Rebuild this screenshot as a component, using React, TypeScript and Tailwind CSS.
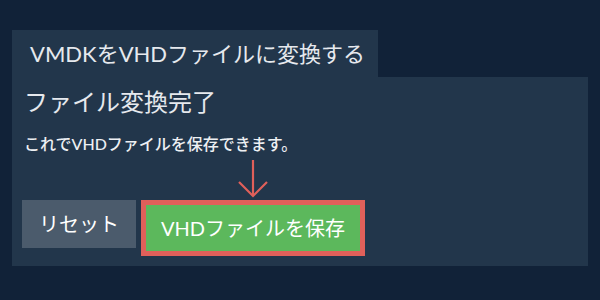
export default function App() {
  const font = { fontFamily: '"Lato", "Noto Sans CJK JP", sans-serif' };
  return (
    <div className="w-[600px] h-[300px] bg-[#112238] pt-[30px] px-[12px]" style={font}>
      <div className="w-[366px] h-[47px] bg-[#22364b] flex items-center pl-[18px] text-[22px] text-[#e6e9ee]">
        VMDKをVHDファイルに変換する
      </div>
      <div className="h-[189px] bg-[#22364b] px-[12px] pt-[9px]">
        <h2 className="text-[24px] leading-[32px] text-[#e6e9ee]">ファイル変換完了</h2>
        <p className="mt-[15px] text-[16px] leading-[22px] font-medium text-[#eef0f3]">
          これでVHDファイルを保存できます。
        </p>
        <div className="mt-[45px] flex items-start gap-[5px] ml-[-2px]">
          <button className="w-[114px] h-[48px] bg-[#4b5b6c] text-white text-[20px] flex items-center justify-center">
            リセット
          </button>
          <div className="relative">
            <svg
              className="absolute left-1/2 -translate-x-1/2 bottom-full mb-[2px]"
              width="30"
              height="38"
              viewBox="0 0 30 38"
              fill="none"
              stroke="#e0605a"
              strokeWidth="2.2"
            >
              <line x1="15" y1="0" x2="15" y2="36" />
              <polyline points="1,22 15,36 29,22" />
            </svg>
            <button className="w-[224px] h-[56px] border-[5px] border-[#e0605a] bg-[#5cb85c] text-white text-[20px] flex items-center justify-center">
              VHDファイルを保存
            </button>
          </div>
        </div>
      </div>
    </div>
  );
}
